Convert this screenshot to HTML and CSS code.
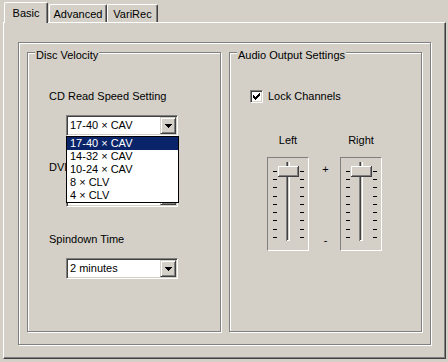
FILE: index.html
```html
<!DOCTYPE html>
<html>
<head>
<meta charset="utf-8">
<title>Drive Properties</title>
<link rel="stylesheet" href="styles.css">
</head>
<body>
<div class="dialog">
  <div class="tabs">
    <div class="tab tab-basic active">Basic</div>
    <div class="tab tab-adv">Advanced</div>
    <div class="tab tab-vari">VariRec</div>
  </div>
  <div class="panel">
    <div class="frame">
      <div class="group disc">
        <span class="legend">Disc Velocity</span>
        <div class="label">CD Read Speed Setting</div>
        <div class="combo">
          <span class="value">17-40 × CAV</span>
          <span class="btn"><svg width="7" height="4" viewBox="0 0 7 4"><rect x="0" y="0" width="7" height="1"/><rect x="1" y="1" width="5" height="1"/><rect x="2" y="2" width="3" height="1"/><rect x="3" y="3" width="1" height="1"/></svg></span>
          <ul class="list">
            <li class="sel">17-40 × CAV</li>
            <li>14-32 × CAV</li>
            <li>10-24 × CAV</li>
            <li>8 × CLV</li>
            <li>4 × CLV</li>
          </ul>
        </div>
        <div class="label gap">DVD</div>
        <div class="combo">
          <span class="value"></span>
          <span class="btn"><svg width="7" height="4" viewBox="0 0 7 4"><rect x="0" y="0" width="7" height="1"/><rect x="1" y="1" width="5" height="1"/><rect x="2" y="2" width="3" height="1"/><rect x="3" y="3" width="1" height="1"/></svg></span>
        </div>
        <div class="label gap2">Spindown Time</div>
        <div class="combo">
          <span class="value">2 minutes</span>
          <span class="btn"><svg width="7" height="4" viewBox="0 0 7 4"><rect x="0" y="0" width="7" height="1"/><rect x="1" y="1" width="5" height="1"/><rect x="2" y="2" width="3" height="1"/><rect x="3" y="3" width="1" height="1"/></svg></span>
        </div>
      </div>
      <div class="group audio">
        <span class="legend">Audio Output Settings</span>
        <div class="check-row">
          <span class="checkbox"><svg width="7" height="7" viewBox="0 0 7 7"><rect x="0" y="2" width="1" height="3"/><rect x="1" y="3" width="1" height="3"/><rect x="2" y="4" width="1" height="3"/><rect x="3" y="3" width="1" height="3"/><rect x="4" y="2" width="1" height="3"/><rect x="5" y="1" width="1" height="3"/><rect x="6" y="0" width="1" height="3"/></svg></span>
          <span class="check-label">Lock Channels</span>
        </div>
        <div class="sliders">
          <div class="slider-col">
            <div class="slider-label">Left</div>
            <div class="slider-box">
              <svg width="40" height="92" viewBox="0 0 40 92" shape-rendering="crispEdges">
                <g fill="#000">
                  <rect x="5" y="13" width="4" height="1"/><rect x="5" y="21" width="4" height="1"/><rect x="5" y="29" width="4" height="1"/><rect x="5" y="38" width="4" height="1"/><rect x="5" y="46" width="4" height="1"/><rect x="5" y="54" width="4" height="1"/><rect x="5" y="62" width="4" height="1"/><rect x="5" y="71" width="4" height="1"/><rect x="5" y="79" width="4" height="1"/>
                  <rect x="32" y="13" width="4" height="1"/><rect x="32" y="21" width="4" height="1"/><rect x="32" y="29" width="4" height="1"/><rect x="32" y="38" width="4" height="1"/><rect x="32" y="46" width="4" height="1"/><rect x="32" y="54" width="4" height="1"/><rect x="32" y="62" width="4" height="1"/><rect x="32" y="71" width="4" height="1"/><rect x="32" y="79" width="4" height="1"/>
                </g>
                <rect x="18" y="4" width="1" height="79" fill="#808080"/>
                <rect x="19" y="4" width="1" height="78" fill="#404040"/>
                <rect x="20" y="4" width="1" height="78" fill="#d4d0c8"/>
                <rect x="21" y="4" width="1" height="79" fill="#fff"/>
                <rect x="19" y="82" width="3" height="1" fill="#fff"/>
                <rect x="10" y="8" width="21" height="11" fill="#d4d0c8"/>
                <rect x="10" y="8" width="20" height="1" fill="#fff"/>
                <rect x="10" y="8" width="1" height="10" fill="#fff"/>
                <rect x="11" y="17" width="19" height="1" fill="#808080"/>
                <rect x="29" y="9" width="1" height="9" fill="#808080"/>
                <rect x="10" y="18" width="21" height="1" fill="#404040"/>
                <rect x="30" y="8" width="1" height="11" fill="#404040"/>
              </svg>
            </div>
          </div>
          <div class="mid-col">
            <div class="plus">+</div>
            <div class="minus">-</div>
          </div>
          <div class="slider-col">
            <div class="slider-label">Right</div>
            <div class="slider-box">
              <svg width="40" height="92" viewBox="0 0 40 92" shape-rendering="crispEdges">
                <g fill="#000">
                  <rect x="5" y="13" width="4" height="1"/><rect x="5" y="21" width="4" height="1"/><rect x="5" y="29" width="4" height="1"/><rect x="5" y="38" width="4" height="1"/><rect x="5" y="46" width="4" height="1"/><rect x="5" y="54" width="4" height="1"/><rect x="5" y="62" width="4" height="1"/><rect x="5" y="71" width="4" height="1"/><rect x="5" y="79" width="4" height="1"/>
                  <rect x="32" y="13" width="4" height="1"/><rect x="32" y="21" width="4" height="1"/><rect x="32" y="29" width="4" height="1"/><rect x="32" y="38" width="4" height="1"/><rect x="32" y="46" width="4" height="1"/><rect x="32" y="54" width="4" height="1"/><rect x="32" y="62" width="4" height="1"/><rect x="32" y="71" width="4" height="1"/><rect x="32" y="79" width="4" height="1"/>
                </g>
                <rect x="18" y="4" width="1" height="79" fill="#808080"/>
                <rect x="19" y="4" width="1" height="78" fill="#404040"/>
                <rect x="20" y="4" width="1" height="78" fill="#d4d0c8"/>
                <rect x="21" y="4" width="1" height="79" fill="#fff"/>
                <rect x="19" y="82" width="3" height="1" fill="#fff"/>
                <rect x="10" y="8" width="21" height="11" fill="#d4d0c8"/>
                <rect x="10" y="8" width="20" height="1" fill="#fff"/>
                <rect x="10" y="8" width="1" height="10" fill="#fff"/>
                <rect x="11" y="17" width="19" height="1" fill="#808080"/>
                <rect x="29" y="9" width="1" height="9" fill="#808080"/>
                <rect x="10" y="18" width="21" height="1" fill="#404040"/>
                <rect x="30" y="8" width="1" height="11" fill="#404040"/>
              </svg>
            </div>
          </div>
        </div>
      </div>
    </div>
  </div>
</div>
</body>
</html>
```

FILE: styles.css
```css
* { box-sizing: border-box; }

body {
  margin: 0;
  background: #d4d0c8;
  font: 11px/13px "Liberation Sans", Arial, sans-serif;
  color: #000;
}

.dialog {
  width: 448px;
  height: 362px;
}

/* Tabs */
.tabs {
  display: flex;
  align-items: flex-start;
  height: 22px;
  padding: 2px 0 0 4px;
}

.tab {
  height: 18px;
  margin-top: 2px;
  padding-top: 3px;
  text-align: center;
  background: #d4d0c8;
  border-left: 1px solid #fff;
  border-top: 1px solid #fff;
  border-right: 1px solid #404040;
  border-top-left-radius: 2px;
  border-top-right-radius: 2px;
  box-shadow: inset -1px 0 0 #808080;
}

.tab.active {
  height: 21px;
  margin-top: 0;
  padding-top: 4px;
  position: relative;
  z-index: 1;
}

.tab-basic { width: 44px; margin-right: 1px; }
.tab-adv { width: 58px; }
.tab-vari { width: 51px; }

/* Panel */
.panel {
  margin-left: 3px;
  width: 443px;
  height: 337px;
  border: 1px solid;
  border-color: #fff #404040 #404040 #fff;
  box-shadow: inset -1px -1px 0 #808080;
  padding: 19px 0 0 14px;
}

.frame {
  width: 413px;
  height: 303px;
  border: 1px solid #808080;
  box-shadow: 1px 1px 0 #fff, inset 1px 1px 0 #fff;
  display: flex;
  gap: 8px;
  padding: 9px 0 0 8px;
}

.group {
  position: relative;
  height: 280px;
  border: 1px solid #808080;
  box-shadow: 1px 1px 0 #fff, inset 1px 1px 0 #fff;
}

.group.disc { width: 194px; padding: 37px 0 0 21px; }
.group.audio { width: 193px; padding: 37px 0 0 20px; }

.legend {
  position: absolute;
  top: -4px;
  left: 7px;
  padding: 0 1px 0 1px;
  background: #d4d0c8;
  white-space: nowrap;
}

.label {
  height: 13px;
  white-space: nowrap;
}

.label.gap { margin-top: 25px; }
.label.gap2 { margin-top: 26px; }

/* Combo box */
.combo {
  position: relative;
  display: flex;
  margin: 12px 0 0 17px;
  width: 112px;
  height: 21px;
  background: #fff;
  border: 1px solid;
  border-color: #808080 #fff #fff #808080;
  box-shadow: inset 1px 1px 0 #404040, inset -1px -1px 0 #d4d0c8;
}

.value {
  flex: 1;
  height: 19px;
  padding: 3px 0 0 3px;
  white-space: nowrap;
}

.btn {
  width: 16px;
  height: 17px;
  margin: 1px 1px 1px 0;
  display: flex;
  align-items: center;
  justify-content: center;
  background: #d4d0c8;
  border: 1px solid;
  border-color: #d4d0c8 #404040 #404040 #d4d0c8;
  box-shadow: inset 1px 1px 0 #fff, inset -1px -1px 0 #808080;
}

.btn svg { display: block; fill: #000; }

.list {
  position: absolute;
  top: 20px;
  left: -1px;
  z-index: 2;
  width: 113px;
  margin: 0;
  padding: 0;
  list-style: none;
  background: #fff;
  border: 1px solid #000;
}

.list li {
  height: 13px;
  padding-left: 3px;
  white-space: nowrap;
}

.list li.sel {
  background: #0a246a;
  color: #fff;
}

/* Audio */
.check-row {
  display: flex;
  align-items: center;
  height: 13px;
}

.checkbox {
  width: 13px;
  height: 13px;
  padding: 2px;
  background: #fff;
  border: 1px solid;
  border-color: #808080 #fff #fff #808080;
  box-shadow: inset 1px 1px 0 #404040, inset -1px -1px 0 #d4d0c8;
}

.checkbox svg { display: block; fill: #000; }

.check-label {
  margin-left: 5px;
  white-space: nowrap;
}

.sliders {
  display: flex;
  margin: 31px 0 0 17px;
}

.slider-col {
  width: 42px;
  display: flex;
  flex-direction: column;
  align-items: center;
}

.slider-label { height: 13px; }

.slider-box {
  margin-top: 10px;
  width: 42px;
  height: 94px;
  border: 1px solid;
  border-color: #808080 #fff #fff #808080;
}

.slider-box svg { display: block; }

.mid-col {
  width: 31px;
  padding: 29px 0 0 2px;
  text-align: center;
}

.minus { margin-top: 58px; }
```
